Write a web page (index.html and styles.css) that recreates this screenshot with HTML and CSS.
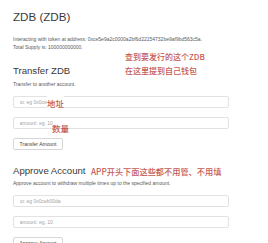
FILE: index.html
```html
<!DOCTYPE html>
<html lang="zh">
<head>
<meta charset="utf-8">
<title>ZDB</title>
<link rel="stylesheet" href="styles.css">
</head>
<body>
<div class="page">
  <h1 class="title">ZDB (ZDB)</h1>
  <p class="info first">Interacting with token at address: 0xce5e9a2c0000a2bf6d22154732be9af9bd563c5a.</p>
  <p class="info">Total Supply is: 100000000000.</p>

  <section class="block">
    <h3 class="heading">Transfer ZDB</h3>
    <p class="info desc">Transfer to another account.</p>
    <input class="field" type="text" placeholder="to: eg 0x0ceb00da">
    <input class="field" type="text" placeholder="amount: eg. 10">
    <button class="btn" type="button">Transfer Amount</button>
  </section>

  <section class="block">
    <h3 class="heading">Approve Account</h3>
    <p class="info desc">Approve account to withdraw multiple times up to the specified amount.</p>
    <input class="field" type="text" placeholder="to: eg 0x0ceb00da">
    <input class="field" type="text" placeholder="amount: eg. 10">
    <button class="btn" type="button">Approve Amount</button>
  </section>

  <div class="note note-top">查到要发行的这个ZDB<br>在这里提到自己钱包</div>
  <div class="note note-addr">地址</div>
  <div class="note note-amt">数量</div>
  <div class="note note-app">APP开头下面这些都不用管、不用填</div>
</div>
</body>
</html>
```

FILE: styles.css
```css
html, body {
  margin: 0;
  padding: 0;
  background: #ffffff;
}

.page {
  position: relative;
  padding: 10px 0 0 13px;
  font-family: "Liberation Sans", Arial, Helvetica, sans-serif;
  color: #333333;
  width: 216px;
  overflow: hidden;
}

.title {
  margin: 0;
  font-size: 11.6px;
  line-height: 13px;
  font-weight: normal;
  color: #3a3a3a;
}

.info {
  margin: 0;
  font-size: 5px;
  line-height: 8px;
  color: #5a5a5a;
  white-space: nowrap;
}

.info.first {
  margin-top: 11.5px;
}

.block {
  display: flex;
  flex-direction: column;
  align-items: flex-start;
}

.heading {
  margin: 14.8px 0 0;
  font-size: 9.6px;
  line-height: 11px;
  font-weight: normal;
  color: #3a3a3a;
}

.desc {
  margin-top: 3.9px;
}

.field {
  box-sizing: border-box;
  width: 216px;
  height: 12px;
  margin: 7.6px 0 0;
  padding: 0 5.5px;
  border: 1px solid #e2e2e2;
  border-radius: 2px;
  background: #fff;
  font-family: "Liberation Sans", Arial, sans-serif;
  font-size: 5px;
  color: #555;
  outline: none;
}

.field + .field {
  margin-top: 9px;
}

.field::placeholder {
  color: #a5a5a5;
}

.btn {
  box-sizing: border-box;
  margin-top: 9px;
  width: 50px;
  height: 12px;
  padding: 0;
  border: 1px solid #d6d6d6;
  border-radius: 2px;
  background: #fff;
  font-family: "Liberation Sans", Arial, sans-serif;
  font-size: 5px;
  color: #444;
}

.note {
  position: absolute;
  font-family: "Noto Sans CJK SC", "Noto Sans", sans-serif;
  font-size: 8px;
  line-height: 14px;
  font-weight: 500;
  color: #c45a55;
  white-space: nowrap;
}

.note-top {
  left: 125px;
  top: 49.5px;
}

.note-addr {
  left: 47px;
  top: 96px;
  background: #fff;
  font-size: 8.5px;
}

.note-amt {
  left: 52px;
  top: 120.5px;
  font-size: 8.5px;
}

.note-app {
  left: 91px;
  top: 163.5px;
  font-size: 8.2px;
}
```
